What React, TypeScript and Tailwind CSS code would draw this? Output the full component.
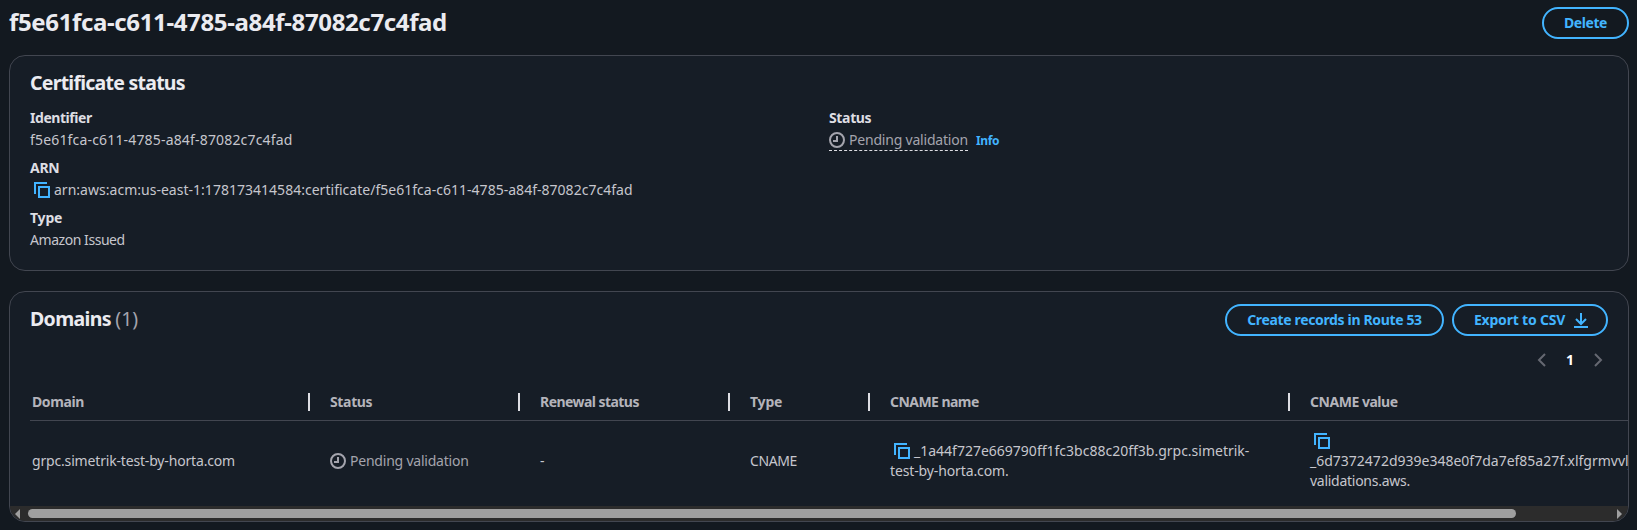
import React from "react";

const CopyIcon = () => (
  <svg viewBox="0 0 16 16" className="h-4 w-4 flex-none text-[#42b4ff]" fill="none" stroke="currentColor" strokeWidth="2" shapeRendering="crispEdges">
    <path d="M1 12V1h12" />
    <path d="M5 5h10v10H5z" />
  </svg>
);

const PendingIcon = () => (
  <svg viewBox="0 0 16 16" className="h-4 w-4 flex-none" fill="none" stroke="currentColor" strokeWidth="2">
    <circle cx="8" cy="8" r="7" />
    <path d="M8 4v5H4" />
  </svg>
);

const buttonClass =
  "flex h-8 items-center justify-center rounded-full border-2 border-[#42b4ff] text-[14px] leading-5 font-bold text-[#42b4ff] whitespace-nowrap";

const columns = [
  { label: "Domain", width: "w-[280px]", pad: "pl-[2px]", tracking: "tracking-[-0.4px]" },
  { label: "Status", width: "w-[210px]", pad: "pl-5", tracking: "tracking-[-0.35px]" },
  { label: "Renewal status", width: "w-[210px]", pad: "pl-5", tracking: "tracking-[-0.55px]" },
  { label: "Type", width: "w-[140px]", pad: "pl-5", tracking: "tracking-[-0.2px]" },
  { label: "CNAME name", width: "w-[420px]", pad: "pl-5", tracking: "tracking-[-0.55px]" },
  { label: "CNAME value", width: "w-[420px]", pad: "pl-5", tracking: "tracking-[-0.47px]" },
];

export default function App() {
  return (
    <div className="h-[530px] w-[1637px] overflow-hidden bg-[#131920] pr-2 pl-[9px] font-['Noto_Sans',sans-serif] text-[14px] leading-5 text-[#c6c6cd]">
      <header className="flex h-[55px] items-start justify-between pt-[7px]">
        <h1 className="text-[24px] leading-[30px] font-bold tracking-[-0.36px] whitespace-nowrap text-[#ebebf0]">f5e61fca-c611-4785-a84f-87082c7c4fad</h1>
        <button className={`${buttonClass} w-[87px] tracking-[-0.45px]`}>Delete</button>
      </header>

      <section className="h-[216px] rounded-2xl border border-[#424650] bg-[#161d26] px-5 pt-[15px]">
        <h2 className="text-[19.5px] leading-6 font-bold tracking-[-0.75px] text-[#ebebf0]">Certificate status</h2>
        <div className="mt-[13px] grid grid-cols-2">
          <dl className="flex flex-col gap-2">
            <div>
              <dt className="font-bold tracking-[-0.45px] text-[#dedee3]">Identifier</dt>
              <dd className="mt-[2px] h-5 tracking-[0.17px]">f5e61fca-c611-4785-a84f-87082c7c4fad</dd>
            </div>
            <div>
              <dt className="font-bold tracking-[-0.3px] text-[#dedee3]">ARN</dt>
              <dd className="mt-[2px] flex h-5 items-center gap-1 pl-1 tracking-[0.02px] whitespace-nowrap">
                <CopyIcon />
                <span>arn:aws:acm:us-east-1:178173414584:certificate/f5e61fca-c611-4785-a84f-87082c7c4fad</span>
              </dd>
            </div>
            <div>
              <dt className="font-bold tracking-[-0.2px] text-[#dedee3]">Type</dt>
              <dd className="mt-[2px] h-5 tracking-[-0.45px]">Amazon Issued</dd>
            </div>
          </dl>
          <dl className="pl-[10px]">
            <dt className="font-bold tracking-[-0.35px] text-[#dedee3]">Status</dt>
            <dd className="mt-[2px] flex h-[21px] items-start gap-2">
              <span className="flex h-[21px] items-center gap-1 border-b border-dashed border-[#dedee3] text-[#a4a4ad]">
                <PendingIcon />
                <span className="tracking-[-0.2px]">Pending validation</span>
              </span>
              <a className="text-[12px] leading-[21px] font-bold tracking-[-0.35px] text-[#42b4ff]">Info</a>
            </dd>
          </dl>
        </div>
      </section>

      <section className="mt-5 flex h-[231px] flex-col overflow-hidden rounded-2xl border border-[#424650] bg-[#161d26]">
        <div className="flex h-[44px] flex-none items-start justify-between px-5 pt-3">
          <h2 className="pt-[3px] text-[19.5px] leading-6 font-bold tracking-[-0.65px] text-[#ebebf0]">
            Domains <span className="font-normal tracking-normal text-[#a4a4ad]">(1)</span>
          </h2>
          <div className="flex gap-2">
            <button className={`${buttonClass} w-[219px] tracking-[-0.35px]`}>Create records in Route 53</button>
            <button className={`${buttonClass} w-[156px] gap-2 pl-[3px] tracking-[-0.2px]`}>
              Export to CSV
              <svg viewBox="0 0 16 16" className="h-4 w-4" fill="none" stroke="currentColor" strokeWidth="2">
                <path d="M1 15h14M8 1v11M3 7l5 5 5-5" />
              </svg>
            </button>
          </div>
        </div>
        <nav className="flex h-[40px] flex-none items-center justify-end gap-4 pt-[7px] pr-[22px]">
          <svg viewBox="0 0 16 16" className="h-4 w-4 text-[#656871]" fill="none" stroke="currentColor" strokeWidth="2">
            <path d="M11 2 5 8l6 6" />
          </svg>
          <span className="font-bold text-white">1</span>
          <svg viewBox="0 0 16 16" className="h-4 w-4 text-[#656871]" fill="none" stroke="currentColor" strokeWidth="2">
            <path d="m5 2 6 6-6 6" />
          </svg>
        </nav>
        <div className="ml-5 flex h-[130px] flex-none flex-col overflow-hidden">
          <div className="flex h-[45px] w-[1680px] flex-none items-center border-b border-[#424650] pt-[8px]">
            {columns.map((c) => (
              <div key={c.label} className={`${c.width} ${c.pad} ${c.tracking} flex flex-none items-center justify-between font-bold whitespace-nowrap text-[#b4b4bb]`}>
                {c.label}
                <span className="h-[18px] w-[2px] bg-[#dedee3]" />
              </div>
            ))}
          </div>
          <div className="flex h-[80px] w-[1680px] flex-none items-center whitespace-nowrap">
            <div className="w-[280px] pl-[2px] tracking-[-0.17px]">grpc.simetrik-test-by-horta.com</div>
            <div className="flex w-[210px] items-center gap-1 pl-5 text-[#a4a4ad]">
              <PendingIcon />
              <span className="tracking-[-0.22px]">Pending validation</span>
            </div>
            <div className="w-[210px] pl-5">-</div>
            <div className="w-[140px] pl-5 tracking-[-0.4px]">CNAME</div>
            <div className="w-[420px] pl-5">
              <div className="flex items-center gap-1 pl-1">
                <CopyIcon />
                <span>_1a44f727e669790ff1fc3bc88c20ff3b.grpc.simetrik-</span>
              </div>
              <div className="tracking-[-0.12px]">test-by-horta.com.</div>
            </div>
            <div className="w-[420px] pl-5">
              <div className="flex h-5 items-center pl-1">
                <CopyIcon />
              </div>
              <div>_6d7372472d939e348e0f7da7ef85a27f.xlfgrmvvlj.acm-</div>
              <div className="tracking-[-0.27px]">validations.aws.</div>
            </div>
          </div>
        </div>
        <div className="flex h-[15px] flex-none items-center bg-[#2c2c2c] pl-[5px]">
          <svg viewBox="0 0 5 10" className="h-[10px] w-[5px] fill-[#9f9f9f]"><path d="M5 0v10L0 5z" /></svg>
          <div className="ml-2 h-[9px] w-[1488px] rounded-full bg-[#9f9f9f]" />
          <svg viewBox="0 0 5 10" className="ml-[101px] h-[10px] w-[5px] fill-[#9f9f9f]"><path d="M0 0v10l5-5z" /></svg>
        </div>
      </section>
    </div>
  );
}
